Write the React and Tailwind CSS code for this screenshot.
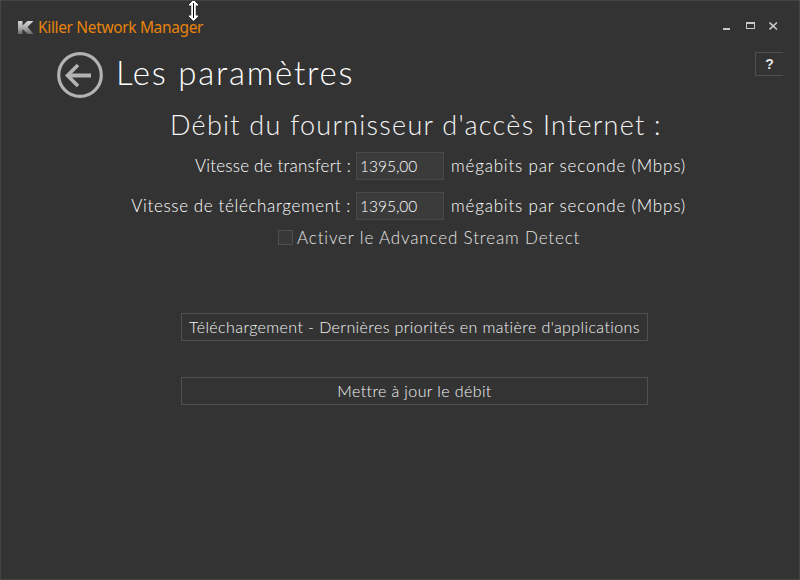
import React from 'react';

const bodyFont = "font-['Lato','Open_Sans',sans-serif]";

const SpeedRow = ({ label, value, labelClass = '', className = '' }) => (
  <div className={`flex h-[28px] items-center ${className}`}>
    <span className={`mb-[2px] w-[350px] text-right text-[17px] leading-none font-light whitespace-nowrap text-white ${labelClass}`}>{label}</span>
    <input
      readOnly
      value={value}
      className="mr-[7px] ml-[5px] h-[28px] w-[88px] border border-[#484848] bg-[#3b3b3b] px-[3px] text-[15.5px] font-light text-white outline-none"
    />
    <span className="mb-[2px] text-[17px] leading-none font-light tracking-[0.8px] whitespace-nowrap text-white">mégabits par seconde (Mbps)</span>
  </div>
);

const ActionButton = ({ label, className = '' }) => (
  <button className={`ml-[180px] flex h-[28px] w-[467px] items-center justify-center border border-[#505050] text-[16px] font-light tracking-[0.4px] whitespace-nowrap text-[#f4f4f4] ${className}`}>
    {label}
  </button>
);

export default function App() {
  return (
    <div className={`relative h-[580px] w-[800px] overflow-hidden border border-[#454545] bg-[#333333] ${bodyFont}`}>
      {/* title bar */}
      <div className="flex h-[50px] items-start justify-between pt-[16px] pr-[21px] pl-[17px]">
        <div className="flex items-center">
          <svg width="16" height="13" viewBox="0 0 16 13" className="mt-[1px]">
            <defs>
              <linearGradient id="k" x1="0" y1="0" x2="0" y2="1">
                <stop offset="0" stopColor="#d8d8d8" />
                <stop offset="0.55" stopColor="#a8a8a8" />
                <stop offset="1" stopColor="#666666" />
              </linearGradient>
            </defs>
            <path d="M0 0H4.5V4.5L9.5 0H15.5L9.5 6L15.5 13H9.5L4.5 8V13H0Z" fill="url(#k)" />
          </svg>
          <span className="ml-[4px] font-['Noto_Sans',sans-serif] text-[15.5px] leading-[20px] tracking-[-0.35px] whitespace-nowrap text-[#e8830c]">
            Killer Network Manager
          </span>
        </div>
        <div className="mt-[5px] flex items-start gap-[14px]">
          <svg width="9" height="9" viewBox="0 0 9 9"><rect x="0" y="6" width="7" height="2" fill="#c8c8c8" /></svg>
          <svg width="9" height="9" viewBox="0 0 9 9"><rect x="0.5" y="0.5" width="8" height="6" fill="none" stroke="#c8c8c8" /><rect x="0" y="0" width="9" height="2" fill="#c8c8c8" /></svg>
          <svg width="9" height="9" viewBox="0 0 9 9"><path d="M0.5 0.5L8 7.5M8 0.5L0.5 7.5" stroke="#c8c8c8" strokeWidth="1.6" /></svg>
        </div>
      </div>

      {/* help */}
      <div className="absolute top-[51px] left-[754px] flex h-[24px] w-[28px] items-center justify-center border-y border-l border-[#4e4e4e] font-['Liberation_Sans',sans-serif] text-[14px] font-bold text-[#e6e6e6]">
        ?
      </div>

      {/* page title */}
      <div className="ml-[56px] flex h-[48px] items-center">
        <svg width="46" height="46" viewBox="0 0 46 46">
          <circle cx="23" cy="23" r="21.3" fill="none" stroke="#b3b3b3" strokeWidth="3.2" />
          <path d="M10.5 23.5H34" stroke="#b3b3b3" strokeWidth="4" />
          <path d="M21 13L10.5 23.5L21 34" fill="none" stroke="#b3b3b3" strokeWidth="3.6" />
        </svg>
        <h1 className="mb-[5px] ml-[13px] text-[33px] leading-none font-light tracking-[1.75px] whitespace-nowrap text-white">Les paramètres</h1>
      </div>

      <h2 className="mt-[9px] ml-[169px] text-[27px] leading-[34px] font-light tracking-[1.25px] whitespace-nowrap text-[#f4f4f4]">
        Débit du fournisseur d'accès Internet :
      </h2>

      <SpeedRow className="mt-[10px]" labelClass="tracking-[0.2px]" label="Vitesse de transfert :" value="1395,00" />
      <SpeedRow className="mt-[12px]" labelClass="tracking-[0.63px]" label="Vitesse de téléchargement :" value="1395,00" />

      <div className="mt-[9px] ml-[277px] flex h-[17px] items-center">
        <span className="h-[15px] w-[15px] border border-[#4e4e4e] bg-[#383838]" />
        <span className="ml-[4px] text-[17px] leading-none font-light tracking-[0.85px] whitespace-nowrap text-[#e4e4e4]">Activer le Advanced Stream Detect</span>
      </div>

      <ActionButton className="mt-[67px]" label="Téléchargement - Dernières priorités en matière d'applications" />
      <ActionButton className="mt-[36px]" label="Mettre à jour le débit" />

      {/* mouse cursor */}
      <svg width="11" height="22" viewBox="0 0 11 22" className="absolute top-[-1px] left-[187px]">
        <path d="M5.5 0.5L10 5H7.2V16H10L5.5 20.5L1 16H3.8V5H1Z" fill="#fff" stroke="#fff" />
        <path d="M5.5 3V18" stroke="#000" strokeWidth="1" />
      </svg>
    </div>
  );
}
